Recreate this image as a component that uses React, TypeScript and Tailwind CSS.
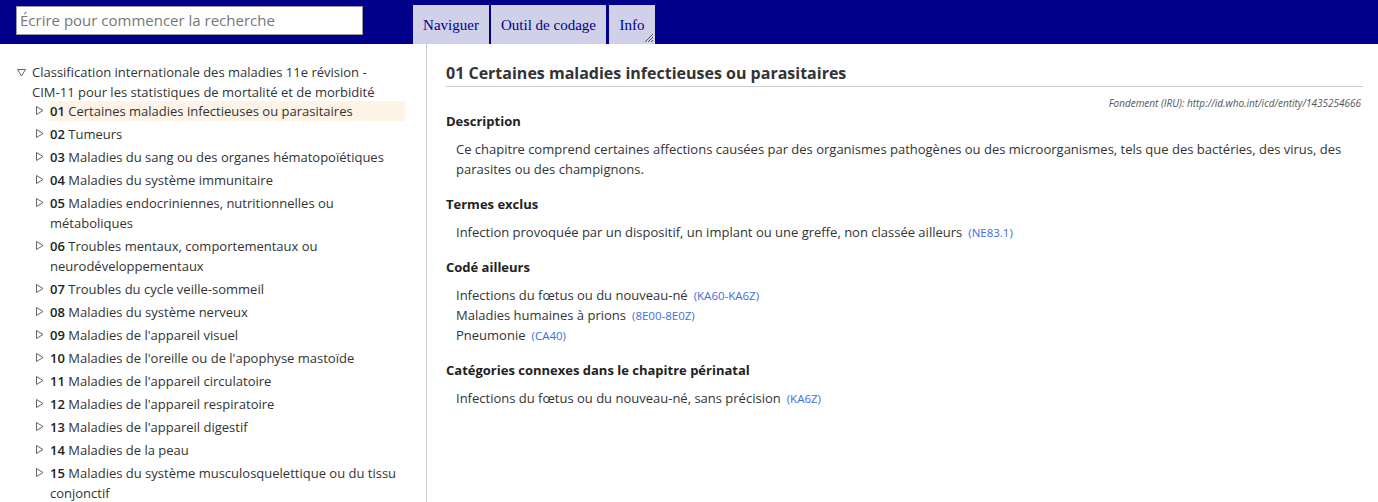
import React from "react";

const chapters: [string, string][] = [
  ["01", "Certaines maladies infectieuses ou parasitaires"],
  ["02", "Tumeurs"],
  ["03", "Maladies du sang ou des organes hématopoïétiques"],
  ["04", "Maladies du système immunitaire"],
  ["05", "Maladies endocriniennes, nutritionnelles ou métaboliques"],
  ["06", "Troubles mentaux, comportementaux ou neurodéveloppementaux"],
  ["07", "Troubles du cycle veille-sommeil"],
  ["08", "Maladies du système nerveux"],
  ["09", "Maladies de l'appareil visuel"],
  ["10", "Maladies de l'oreille ou de l'apophyse mastoïde"],
  ["11", "Maladies de l'appareil circulatoire"],
  ["12", "Maladies de l'appareil respiratoire"],
  ["13", "Maladies de l'appareil digestif"],
  ["14", "Maladies de la peau"],
  ["15", "Maladies du système musculosquelettique ou du tissu conjonctif"],
];

const font = { fontFamily: '"Open Sans", "Noto Sans", sans-serif' };

function Tri({ open }: { open?: boolean }) {
  return (
    <svg width="9" height="9" viewBox="0 0 9 9" className="shrink-0">
      {open ? (
        <path d="M0.5 1.5 H8.5 L4.5 8 Z" fill="none" stroke="#555" strokeWidth="0.9" />
      ) : (
        <path d="M1.5 0.5 V8.5 L8 4.5 Z" fill="none" stroke="#555" strokeWidth="0.9" />
      )}
    </svg>
  );
}

function Item({ text, code }: { text: string; code: string }) {
  return (
    <div className="h-[20px] pl-[10px] text-[13px] leading-[20px] text-[#333]">
      {text}
      <span className="ml-[6px] text-[11.5px] leading-[0px] text-[#3b6ee0]">({code})</span>
    </div>
  );
}

function SectionTitle({ children }: { children: React.ReactNode }) {
  return <div className="text-[13px] font-bold leading-[20px] text-[#222]">{children}</div>;
}

export default function App() {
  return (
    <div className="flex h-[502px] w-[1378px] flex-col overflow-hidden bg-white" style={font}>
      <div className="flex h-[44px] shrink-0 bg-[#00008b]">
        <div className="ml-[16px] mt-[6px] h-[29px] w-[347px] border border-[#999] bg-white pl-[3px] text-[15px] leading-[27px] text-[#777]">
          Écrire pour commencer la recherche
        </div>
        <div
          className="ml-[50px] mt-[5px] flex h-[39px] text-[15px] text-[#00008b]"
          style={{ fontFamily: '"Liberation Serif", "DejaVu Serif", serif' }}
        >
          <div className="flex w-[76px] items-center justify-center bg-[#d0d0e8] pt-[2px]">Naviguer</div>
          <div className="ml-[2px] flex w-[115px] items-center justify-center bg-[#d0d0e8] pt-[2px]">Outil de codage</div>
          <div className="relative ml-[3px] flex w-[46px] items-center justify-center bg-[#d0d0e8] pt-[2px]">
            Info
            <svg width="10" height="10" viewBox="0 0 10 10" className="absolute bottom-[1px] right-[1px]">
              <path d="M9 1 L1 9 M9 4 L4 9 M9 7 L7 9" stroke="#333" strokeWidth="0.8" />
            </svg>
          </div>
        </div>
      </div>
      <div className="flex min-h-0 flex-1">
        <div className="w-[427px] shrink-0 border-r border-[#ccc] pt-[18px] text-[13px] leading-[20px] text-[#333]">
          <div className="flex pl-[17px]">
            <div className="mr-[6px] pt-[6px]">
              <Tri open />
            </div>
            <div className="w-[360px]">
              Classification internationale des maladies 11e révision - CIM-11 pour les statistiques de mortalité et de morbidité
            </div>
          </div>
          <div className="-mt-[1px] flex flex-col gap-[3px]">
            {chapters.map(([c, t], i) => (
              <div key={c} className="flex pl-[35px]">
                <div className="mr-[6px] pt-[5px]">
                  <Tri />
                </div>
                <div className={`w-[355px] ${i === 0 ? "bg-[#fdf3e6]" : ""}`}>
                  <span className="font-semibold text-[#222]">{c}</span> {t}
                </div>
              </div>
            ))}
          </div>
        </div>
        <div className="flex-1 pl-[19px] pr-[15px] pt-[17px] text-[#333]">
          <div className="border-b border-[#ccc] pb-[1px] text-[16px] font-bold leading-[24px] text-[#333]">
            01 Certaines maladies infectieuses ou parasitaires
          </div>
          <div className="mt-[9px] pr-[2px] text-right text-[10px] italic leading-[14px] text-[#555]">
            Fondement (IRU): http://id.who.int/icd/entity/1435254666
          </div>
          <div className="mt-[1px]">
            <SectionTitle>Description</SectionTitle>
            <div className="mt-[8px] pl-[10px] text-[13px] leading-[20px] text-[#333]">
              Ce chapitre comprend certaines affections causées par des organismes pathogènes ou des microorganismes, tels que des bactéries, des virus, des parasites ou des champignons.
            </div>
          </div>
          <div className="mt-[15px]">
            <SectionTitle>Termes exclus</SectionTitle>
            <div className="mt-[8px]">
              <Item text="Infection provoquée par un dispositif, un implant ou une greffe, non classée ailleurs" code="NE83.1" />
            </div>
          </div>
          <div className="mt-[15px]">
            <SectionTitle>Codé ailleurs</SectionTitle>
            <div className="mt-[8px]">
              <Item text="Infections du fœtus ou du nouveau-né" code="KA60-KA6Z" />
              <Item text="Maladies humaines à prions" code="8E00-8E0Z" />
              <Item text="Pneumonie" code="CA40" />
            </div>
          </div>
          <div className="mt-[15px]">
            <SectionTitle>Catégories connexes dans le chapitre périnatal</SectionTitle>
            <div className="mt-[8px]">
              <Item text="Infections du fœtus ou du nouveau-né, sans précision" code="KA6Z" />
            </div>
          </div>
        </div>
      </div>
    </div>
  );
}
